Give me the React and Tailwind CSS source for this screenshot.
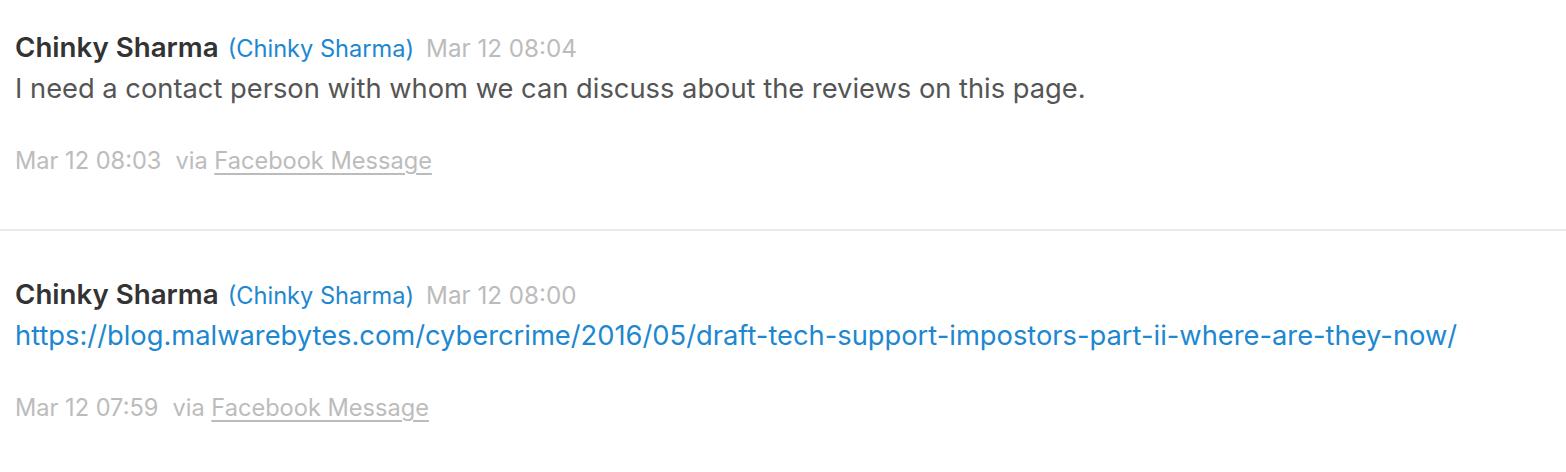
import React from "react";

const messages = [
  {
    id: 1,
    name: "Chinky Sharma",
    alias: "(Chinky Sharma)",
    time: "Mar 12 08:04",
    body: "I need a contact person with whom we can discuss about the reviews on this page.",
    isLink: false,
    sent: "Mar 12 08:03",
  },
  {
    id: 2,
    name: "Chinky Sharma",
    alias: "(Chinky Sharma)",
    time: "Mar 12 08:00",
    body: "https://blog.malwarebytes.com/cybercrime/2016/05/draft-tech-support-impostors-part-ii-where-are-they-now/",
    isLink: true,
    sent: "Mar 12 07:59",
  },
];

const Message = ({ msg, first, last }) => (
  <div
    className={`px-[15px] ${first ? "pt-[30px]" : "pt-[46px]"} ${
      last ? "pb-[40px]" : "pb-[53px] border-b-2 border-[#e9e9e9]"
    }`}
  >
    <div className="flex items-baseline leading-[34px]">
      <span className="text-[27.7px] font-semibold text-[#333]">{msg.name}</span>
      <span className="ml-[9px] text-[23.6px] text-[#1d87cf]">{msg.alias}</span>
      <span className="ml-[12px] text-[24.2px] text-[#bcbcbc]">{msg.time}</span>
    </div>
    <div className="mt-[5px] text-[27.3px] leading-[36px] whitespace-nowrap">
      {msg.isLink ? (
        <a href="#" className="text-[#1d87cf]">{msg.body}</a>
      ) : (
        <span className="text-[#555]">{msg.body}</span>
      )}
    </div>
    <div className="mt-[39px] text-[23.6px] leading-[30px] text-[#bcbcbc] whitespace-nowrap">
      <span>{msg.sent}</span>
      <span className="ml-[14px]">via </span>
      <a href="#" className="underline underline-offset-[4px] decoration-[#bcbcbc]">Facebook Message</a>
    </div>
  </div>
);

export default function App() {
  return (
    <div className="w-full min-h-screen bg-white font-['Inter',sans-serif]">
      {messages.map((m, i) => (
        <Message key={m.id} msg={m} first={i === 0} last={i === messages.length - 1} />
      ))}
    </div>
  );
}
